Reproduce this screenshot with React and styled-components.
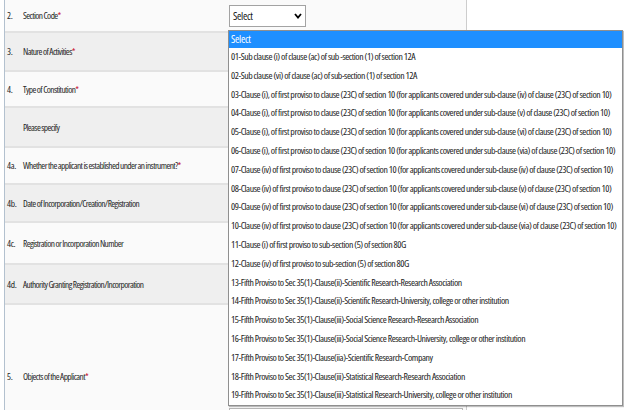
import React from "react";
import styled, { createGlobalStyle } from "styled-components";

const GlobalStyle = createGlobalStyle`
  html, body { margin: 0; padding: 0; background: #ffffff; }
  body {
    font-family: "Open Sans", "Liberation Sans", sans-serif;
    font-stretch: 75%;
    font-size: 10px;
    color: #262626;
  }
`;

const Page = styled.div`
  position: relative;
  width: 624px;
  height: 410px;
  overflow: hidden;
  padding-left: 4px;
  box-sizing: border-box;
  background: #ffffff;
`;

const Table = styled.div`
  width: 463px;
  display: flex;
  flex-direction: column;
  border-left: 1px solid #b3c1cf;
  border-right: 1px solid #cdcdcd;
  box-sizing: border-box;
`;

const Row = styled.div`
  display: grid;
  grid-template-columns: 224px 1fr;
  grid-template-rows: 100%;
  align-items: center;
  height: ${p => p.h}px;
  flex: none;
  box-sizing: border-box;
  background: ${p => (p.alt ? "#efefef" : "#fafafa")};
  border-bottom: 2px solid #e2e2e2;
`;

const LabelCell = styled.div`
  display: flex;
  align-items: center;
  padding-left: 2px;
  font-size: 9.4px;
  letter-spacing: -0.6px;
  white-space: nowrap;
`;

const Num = styled.span`
  width: 16px;
  flex: none;
  letter-spacing: -0.3px;
`;

const Req = styled.span`
  color: #c8102e;
`;

const ControlCell = styled.div`
  display: flex;
  align-self: ${p => (p.top ? "start" : "center")};
  padding-top: ${p => (p.top ? `${p.top}px` : "0")};
`;

const SelectBox = styled.div`
  width: 77px;
  height: 22px;
  box-sizing: border-box;
  border: 1px solid #a3a3a3;
  background: #ffffff;
  display: flex;
  align-items: center;
  justify-content: space-between;
  padding: 0 3px 0 3px;
  color: #111;
  font-size: 10.5px;
  letter-spacing: -0.3px;
`;

const TextArea = styled.div`
  width: 234px;
  height: 36px;
  box-sizing: border-box;
  border: 1px solid #b5b5b5;
  background: #fff;
`;

const Dropdown = styled.ul`
  position: absolute;
  top: 30px;
  left: 228px;
  width: 395px;
  height: 376px;
  margin: 0;
  padding: 0;
  list-style: none;
  box-sizing: border-box;
  background: #ffffff;
  border: 1px solid #8f8f8f;
  box-shadow: 1px 1px 1px rgba(0, 0, 0, 0.25);
  overflow: hidden;
`;

const Option = styled.li`
  height: ${p => (p.selected ? 17 : 18.8)}px;
  line-height: ${p => (p.selected ? 17 : 18.8)}px;
  padding-left: 2px;
  white-space: nowrap;
  letter-spacing: ${p => (p.selected ? "-0.3px" : "-0.45px")};
  background: ${p => (p.selected ? "#1e8fff" : "transparent")};
  color: ${p => (p.selected ? "#ffffff" : "#222222")};
  font-size: ${p => (p.selected ? "10.5px" : "9.8px")};
`;

const rows = [
  { n: "2.", t: "Section Code", req: true, h: 33, select: true },
  { n: "3.", t: "Nature of Activities", req: true, h: 39 },
  { n: "4.", t: "Type of Constitution", req: true, h: 36 },
  { n: "", t: "Please specify", h: 40 },
  { n: "4a.", t: "Whether the applicant is established under an instrument?", req: true, h: 37 },
  { n: "4b.", t: "Date of Incorporation/Creation/Registration", h: 38 },
  { n: "4c.", t: "Registration or Incorporation Number", h: 42 },
  { n: "4d.", t: "Authority Granting Registration/Incorporation", h: 40 },
  { n: "5.", t: "Objects of the Applicant", req: true, h: 145, area: true },
];

const options = [
  "01-Sub clause (i) of clause (ac) of sub -section (1) of section 12A",
  "02-Sub clause (vi) of clause (ac) of sub-section (1) of section 12A",
  "03-Clause (i), of first proviso to clause (23C) of section 10 (for applicants covered under sub-clause (iv) of clause (23C) of section 10)",
  "04-Clause (i), of first proviso to clause (23C) of section 10 (for applicants covered under sub-clause (v) of clause (23C) of section 10)",
  "05-Clause (i), of first proviso to clause (23C) of section 10 (for applicants covered under sub-clause (vi) of clause (23C) of section 10)",
  "06-Clause (i), of first proviso to clause (23C) of section 10 (for applicants covered under sub-clause (via) of clause (23C) of section 10)",
  "07-Clause (iv) of first proviso to clause (23C) of section 10 (for applicants covered under sub-clause (iv) of clause (23C) of section 10)",
  "08-Clause (iv) of first proviso to clause (23C) of section 10 (for applicants covered under sub-clause (v) of clause (23C) of section 10)",
  "09-Clause (iv) of first proviso to clause (23C) of section 10 (for applicants covered under sub-clause (vi) of clause (23C) of section 10)",
  "10-Clause (iv) of first proviso to clause (23C) of section 10 (for applicants covered under sub-clause (via) of clause (23C) of section 10)",
  "11-Clause (i) of first proviso to sub-section (5) of section 80G",
  "12-Clause (iv) of first proviso to sub-section (5) of section 80G",
  "13-Fifth Proviso to Sec 35(1)-Clause(ii)-Scientific Research-Research Association",
  "14-Fifth Proviso to Sec 35(1)-Clause(ii)-Scientific Research-University, college or other institution",
  "15-Fifth Proviso to Sec 35(1)-Clause(iii)-Social Science Research-Research Association",
  "16-Fifth Proviso to Sec 35(1)-Clause(iii)-Social Science Research-University, college or other institution",
  "17-Fifth Proviso to Sec 35(1)-Clause(iia)-Scientific Research-Company",
  "18-Fifth Proviso to Sec 35(1)-Clause(iii)-Statistical Research-Research Association",
  "19-Fifth Proviso to Sec 35(1)-Clause(iii)-Statistical Research-University, college or other institution",
];

const Chevron = () => (
  <svg width="8" height="6" viewBox="0 0 8 6">
    <polyline points="1,1 4,4.6 7,1" fill="none" stroke="#000" strokeWidth="1.8" />
  </svg>
);

export default function App() {
  return (
    <Page>
      <GlobalStyle />
      <Table>
        {rows.map((r, i) => (
          <Row key={i} h={r.h} alt={i % 2 === 1}>
            <LabelCell>
              <Num>{r.n}</Num>
              <span>
                {r.t}
                {r.req && <Req>*</Req>}
              </span>
            </LabelCell>
            {r.select ? (
              <ControlCell>
                <SelectBox>
                  <span>Select</span>
                  <Chevron />
                </SelectBox>
              </ControlCell>
            ) : r.area ? (
              <ControlCell top={103}>
                <TextArea />
              </ControlCell>
            ) : (
              <ControlCell />
            )}
          </Row>
        ))}
      </Table>
      <Dropdown>
        <Option selected>Select</Option>
        {options.map((o, i) => (
          <Option key={i}>{o}</Option>
        ))}
      </Dropdown>
    </Page>
  );
}
